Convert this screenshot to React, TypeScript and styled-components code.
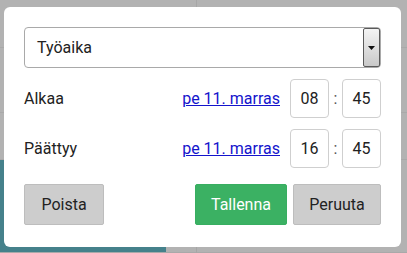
import React, { useState } from "react";
import styled, { createGlobalStyle } from "styled-components";

const GlobalStyle = createGlobalStyle`
  html, body {
    margin: 0;
    padding: 0;
    background: #b2b2b2;
    font-family: Roboto, "Liberation Sans", sans-serif;
  }
`;

const Page = styled.div`
  position: relative;
  width: 407px;
  height: 253px;
  overflow: hidden;
  display: grid;
  grid-template-columns: 166px 31px 1fr;
  grid-template-rows: 48px 65px 47px 1fr;
  background: #b2b2b2;
`;

const Cell = styled.div<{ $teal?: boolean; $line?: boolean }>`
  background: ${(p) => (p.$teal ? "#45818b" : "transparent")};
  border-right: ${(p) => (p.$line ? "1px solid #a6a6a6" : "none")};
  border-bottom: 1px solid #a9a9a9;
`;

const Modal = styled.div`
  position: absolute;
  left: 4px;
  top: 7px;
  width: 357px;
  padding: 20px 20px 22px;
  background: #fff;
  border-radius: 6px;
  display: flex;
  flex-direction: column;
`;

const SelectBox = styled.div`
  height: 41px;
  box-sizing: border-box;
  border: 1px solid #a9a9a9;
  border-radius: 4px;
  display: flex;
  align-items: stretch;
  padding-left: 12px;
  font-size: 16px;
  color: #222;
`;

const SelectText = styled.div`
  flex: 1;
  display: flex;
  align-items: center;
`;

const SelectArrow = styled.div`
  width: 17px;
  box-sizing: border-box;
  border: 1px solid #5a5a5a;
  border-radius: 2px;
  background: linear-gradient(#f4f4f4, #c9c9c9);
  display: flex;
  align-items: center;
  justify-content: center;
`;

const Row = styled.div`
  display: flex;
  align-items: center;
  margin-top: 11px;
  height: 39px;
`;

const Label = styled.div`
  flex: 1;
  font-size: 16px;
  color: #222;
`;

const DateLink = styled.a`
  font-size: 16px;
  color: #1414cc;
  text-decoration: underline;
  margin-right: 10px;
  cursor: pointer;
`;

const TimeInput = styled.input`
  width: 39px;
  height: 39px;
  box-sizing: border-box;
  border: 1px solid #cfcfcf;
  border-radius: 4px;
  text-align: center;
  font-family: inherit;
  font-size: 16px;
  color: #222;
  padding: 0;
  outline: none;
`;

const Colon = styled.span`
  width: 13px;
  text-align: center;
  font-size: 16px;
  color: #555;
`;

const Actions = styled.div`
  display: flex;
  margin-top: 16px;
  gap: 6px;
`;

const Spacer = styled.div`
  flex: 1;
`;

const Button = styled.button<{ $primary?: boolean; $w: number }>`
  width: ${(p) => p.$w}px;
  height: 41px;
  box-sizing: border-box;
  border: 1px solid ${(p) => (p.$primary ? "#38ae61" : "#bdbdbd")};
  border-radius: 2px;
  background: ${(p) => (p.$primary ? "#3bb163" : "#cdcdcd")};
  color: ${(p) => (p.$primary ? "#fff" : "#222")};
  font-family: inherit;
  font-size: 16px;
  padding: 0;
  cursor: pointer;
`;

const TimeRow: React.FC<{ label: string; hour: string; minute: string }> = ({
  label,
  hour,
  minute,
}) => {
  const [h, setH] = useState(hour);
  const [m, setM] = useState(minute);
  return (
    <Row>
      <Label>{label}</Label>
      <DateLink>pe 11. marras</DateLink>
      <TimeInput value={h} onChange={(e) => setH(e.target.value)} />
      <Colon>:</Colon>
      <TimeInput value={m} onChange={(e) => setM(e.target.value)} />
    </Row>
  );
};

export default function App() {
  return (
    <>
      <GlobalStyle />
      <Page>
        <Cell />
        <Cell $line />
        <Cell />
        <Cell />
        <Cell $line />
        <Cell />
        <Cell />
        <Cell $line />
        <Cell />
        <Cell $teal />
        <Cell $line />
        <Cell />
        <Modal>
          <SelectBox>
            <SelectText>Työaika</SelectText>
            <SelectArrow>
              <svg width="7" height="4" viewBox="0 0 7 4">
                <path d="M0 0h7L3.5 4z" fill="#111" />
              </svg>
            </SelectArrow>
          </SelectBox>
          <TimeRow label="Alkaa" hour="08" minute="45" />
          <TimeRow label="Päättyy" hour="16" minute="45" />
          <Actions>
            <Button $w={80}>Poista</Button>
            <Spacer />
            <Button $primary $w={92}>
              Tallenna
            </Button>
            <Button $w={88}>Peruuta</Button>
          </Actions>
        </Modal>
      </Page>
    </>
  );
}
